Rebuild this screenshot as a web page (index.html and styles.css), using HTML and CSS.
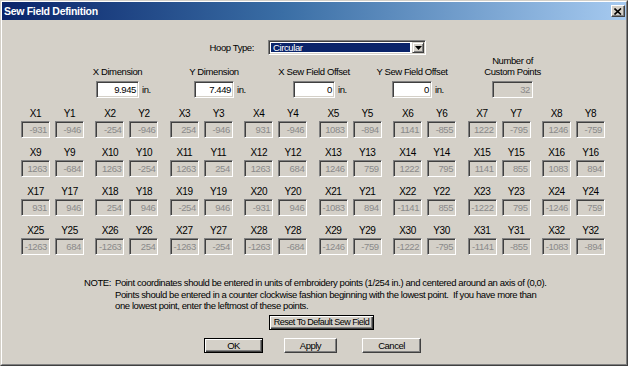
FILE: index.html
```html
<!DOCTYPE html>
<html lang="en">

<head>
    <meta charset="utf-8">
    <title>Sew Field Definition</title>
    <link rel="stylesheet" href="styles.css">
</head>

<body>
    <div class="window">
        <div class="frame">
            <div class="titlebar">
                <span class="title">Sew Field Definition</span>
                <span class="close">
                    <svg width="8" height="7" viewBox="0 0 8 7">
                        <path d="M0.5 0.5 L7 6.5 M7 0.5 L0.5 6.5" stroke="#000" stroke-width="1.6" fill="none" />
                    </svg>
                </span>
            </div>

            <div class="hoop-row">
                <span class="hoop-label">Hoop Type:</span>
                <div class="select">
                    <span class="sel-value">Circular</span>
                    <span class="sel-arrow">
                        <svg width="7" height="4" viewBox="0 0 7 4"><path d="M0 0 H7 L3.5 4 Z" fill="#000" /></svg>
                    </span>
                </div>
            </div>

            <div class="dims">
                <div class="dim">
                    <div class="dim-field w43">
                        <div class="dim-label">X Dimension</div>
                        <div class="field edit">9.945</div>
                    </div>
                    <span class="unit">in.</span>
                </div>
                <div class="dim">
                    <div class="dim-field w40">
                        <div class="dim-label">Y Dimension</div>
                        <div class="field edit">7.449</div>
                    </div>
                    <span class="unit">in.</span>
                </div>
                <div class="dim">
                    <div class="dim-field w42">
                        <div class="dim-label">X Sew Field Offset</div>
                        <div class="field edit">0</div>
                    </div>
                    <span class="unit">in.</span>
                </div>
                <div class="dim">
                    <div class="dim-field w40">
                        <div class="dim-label">Y Sew Field Offset</div>
                        <div class="field edit">0</div>
                    </div>
                    <span class="unit">in.</span>
                </div>
                <div class="dim">
                    <div class="dim-field w41">
                        <div class="dim-label">Number of<br>Custom Points</div>
                        <div class="field disabled">32</div>
                    </div>
                </div>
            </div>

            <div id="points" class="points"></div>

            <div class="note">
                <span class="note-label">NOTE:</span>
                <span class="note-text">Point coordinates should be entered in units of embroidery points (1/254 in.) and centered around an axis of (0,0).<br>Points should be entered in a counter clockwise fashion beginning with the lowest point.&nbsp; If you have more than<br>one lowest point, enter the leftmost of these points.</span>
            </div>

            <div class="reset-row">
                <button class="btn default reset">Reset To Default Sew Field</button>
            </div>

            <div class="actions">
                <button class="btn default ok">OK</button>
                <button class="btn apply">Apply</button>
                <button class="btn cancel">Cancel</button>
            </div>
        </div>
    </div>

    <script>
        var xs = [-931, -254, 254, 931, 1083, 1141, 1222, 1246,
            1263, 1263, 1263, 1263, 1246, 1222, 1141, 1083,
            931, 254, -254, -931, -1083, -1141, -1222, -1246,
            -1263, -1263, -1263, -1263, -1246, -1222, -1141, -1083];
        var ys = [-946, -946, -946, -946, -894, -855, -795, -759,
            -684, -254, 254, 684, 759, 795, 855, 894,
            946, 946, 946, 946, 894, 855, 795, 759,
            684, 254, -254, -684, -759, -795, -855, -894];

        function makePoint(name, value) {
            var pt = document.createElement('div');
            pt.className = 'pt';
            var label = document.createElement('div');
            label.className = 'pt-label';
            label.textContent = name;
            var field = document.createElement('div');
            field.className = 'field disabled';
            field.textContent = value;
            pt.appendChild(label);
            pt.appendChild(field);
            return pt;
        }

        var grid = document.getElementById('points');
        for (var i = 0; i < xs.length; i++) {
            var pair = document.createElement('div');
            pair.className = 'pair';
            pair.appendChild(makePoint('X' + (i + 1), xs[i]));
            pair.appendChild(makePoint('Y' + (i + 1), ys[i]));
            grid.appendChild(pair);
        }
    </script>
</body>

</html>
```

FILE: styles.css
```css
* {
    box-sizing: border-box;
}

body {
    margin: 0;
    font-family: "Liberation Sans", Arial, sans-serif;
    font-size: 9.5px;
    letter-spacing: -0.4px;
    color: #000;
    background: #d4d0c8;
}

/* window frame */
.window {
    width: 628px;
    height: 366px;
    background: #d4d0c8;
    border: 1px solid;
    border-color: #d4d0c8 #404040 #404040 #d4d0c8;
}

.frame {
    height: 100%;
    border: 1px solid;
    border-color: #fff #808080 #808080 #fff;
}

.titlebar {
    height: 18px;
    display: flex;
    align-items: center;
    justify-content: space-between;
    padding: 0 1px 0 2px;
    background: linear-gradient(to right, #0a246a, #3a6ea5 45%, #a6caf0);
}

.title {
    color: #fff;
    font-weight: bold;
    font-size: 10.5px;
    letter-spacing: -0.3px;
}

.close {
    width: 14px;
    height: 12px;
    display: flex;
    align-items: center;
    justify-content: center;
    background: #d4d0c8;
    border: 1px solid;
    border-color: #fff #404040 #404040 #fff;
    box-shadow: inset -1px -1px #808080;
}

/* hoop type */
.hoop-row {
    display: flex;
    align-items: center;
    margin-top: 20px;
    padding-left: 192px;
    height: 15px;
}

.hoop-label {
    width: 60px;
    text-align: right;
    margin-right: 14px;
}

.select {
    width: 158px;
    height: 15px;
    display: flex;
    padding: 1px;
    background: #fff;
    border: 1px solid;
    border-color: #808080 #fff #fff #808080;
    box-shadow: inset 1px 1px #404040, inset -1px -1px #d4d0c8;
}

.sel-value {
    flex: 1;
    margin: 1px 2px 1px 1px;
    padding-left: 2px;
    line-height: 9px;
    color: #fff;
    background: #0a246a;
}

.sel-arrow {
    width: 12px;
    display: flex;
    align-items: center;
    justify-content: center;
    background: #d4d0c8;
    border: 1px solid;
    border-color: #d4d0c8 #404040 #404040 #d4d0c8;
    box-shadow: inset 1px 1px #fff, inset -1px -1px #808080;
}

/* dimension inputs */
.dims {
    display: grid;
    grid-template-columns: 98px 99px 99px 100px auto;
    align-items: end;
    padding-left: 94px;
}

.dim {
    display: flex;
    align-items: flex-end;
    gap: 3px;
}

.dim-field {
    display: flex;
    flex-direction: column;
    align-items: center;
}

.w40 { width: 40px; }
.w41 { width: 41px; }
.w42 { width: 42px; }
.w43 { width: 43px; }

.dim-label {
    white-space: nowrap;
    text-align: center;
    line-height: 11px;
    margin-bottom: 4px;
}

.dim-field .field {
    width: 100%;
}

.unit {
    line-height: 17px;
}

/* sunken text boxes */
.field {
    height: 17px;
    line-height: 15px;
    padding-right: 2px;
    text-align: right;
    white-space: nowrap;
    border: 1px solid;
    border-color: #808080 #fff #fff #808080;
    box-shadow: inset 1px 1px #404040, inset -1px -1px #d4d0c8;
}

.field.edit {
    background: #fff;
    color: #000;
}

.field.disabled {
    background: #d4d0c8;
    color: #8a8a8a;
}

/* custom points grid */
.points {
    display: grid;
    grid-template-columns: repeat(8, 74.43px);
    row-gap: 9px;
    margin-top: 10px;
    padding-left: 19px;
}

.pair {
    display: flex;
    gap: 5px;
}

.pt {
    width: 29px;
    display: flex;
    flex-direction: column;
    align-items: center;
}

.pt-label {
    line-height: 11px;
    margin-bottom: 2px;
    font-size: 10px;
}

.pt .field {
    width: 100%;
}

/* note */
.note {
    display: flex;
    margin-top: 22px;
    padding-left: 82px;
    line-height: 11.5px;
    white-space: nowrap;
}

.note-label {
    width: 31px;
}

/* buttons */
.btn {
    display: block;
    height: 15px;
    padding: 0;
    font: inherit;
    letter-spacing: -0.5px;
    line-height: 13px;
    text-align: center;
    white-space: nowrap;
    color: #000;
    background: #d4d0c8;
    border: 1px solid;
    border-color: #fff #404040 #404040 #fff;
    box-shadow: inset -1px -1px #808080;
}

.btn.default {
    border-color: #000;
    box-shadow: inset 1px 1px #fff, inset -1px -1px #404040, inset -2px -2px #808080;
}

.reset-row {
    margin-top: 3px;
    padding-left: 267px;
}

.reset {
    width: 105px;
    font-size: 9px;
}

.actions {
    display: flex;
    margin-top: 8px;
    padding-left: 202px;
}

.ok {
    width: 59px;
}

.apply {
    width: 53px;
    margin-left: 21px;
}

.cancel {
    width: 59px;
    margin-left: 25px;
}
```
